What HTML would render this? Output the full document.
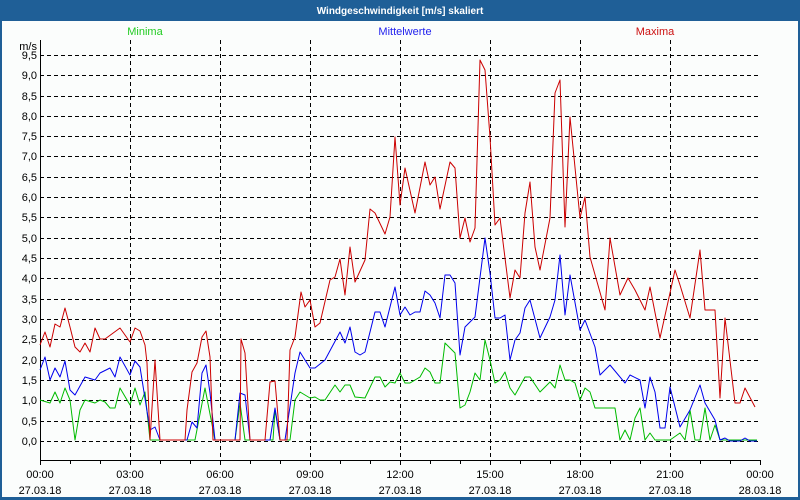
<!DOCTYPE html>
<html><head><meta charset="utf-8"><style>
html,body{margin:0;padding:0;width:800px;height:500px;overflow:hidden;background:#1f5f97}
svg{display:block}
text{font-family:"Liberation Sans",sans-serif;font-size:11px}
</style></head><body>
<svg width="800" height="500" viewBox="0 0 800 500" xmlns="http://www.w3.org/2000/svg">
<rect x="0" y="0" width="800" height="500" fill="#1f5f97"/>
<rect x="2" y="21" width="796" height="476" fill="#fbfdfc"/>
<text x="400" y="14" fill="#fff" font-weight="bold" text-anchor="middle" style="font-size:10px">Windgeschwindigkeit [m/s] skaliert</text>
<text x="145" y="35" fill="#22cc22" text-anchor="middle">Minima</text>
<text x="405" y="35" fill="#2222ee" text-anchor="middle">Mittelwerte</text>
<text x="655" y="35" fill="#cc1111" text-anchor="middle">Maxima</text>
<g stroke="#000" stroke-width="1" stroke-dasharray="4,3" fill="none">
<path d="M40 441.5H760M40 421.5H760M40 400.5H760M40 380.5H760M40 360.5H760M40 339.5H760M40 319.5H760M40 299.5H760M40 278.5H760M40 258.5H760M40 238.5H760M40 217.5H760M40 197.5H760M40 177.5H760M40 156.5H760M40 136.5H760M40 116.5H760M40 96.5H760M40 75.5H760M40 55.5H760"/>
<path d="M130.5 40V460M220.5 40V460M310.5 40V460M400.5 40V460M490.5 40V460M580.5 40V460M670.5 40V460"/>
</g>
<g stroke="#000" stroke-width="1" fill="none">
<path d="M40.5 40V460.5H760"/>
<path d="M40.5 460V465M70.5 460V464M100.5 460V464M130.5 460V465M160.5 460V464M190.5 460V464M220.5 460V465M250.5 460V464M280.5 460V464M310.5 460V465M340.5 460V464M370.5 460V464M400.5 460V465M430.5 460V464M460.5 460V464M490.5 460V465M520.5 460V464M550.5 460V464M580.5 460V465M610.5 460V464M640.5 460V464M670.5 460V465M700.5 460V464M730.5 460V464M760.5 460V465"/>
</g>
<g fill="#000" text-anchor="end">
<text x="37" y="50">m/s</text>
<text x="37" y="59">9,5</text><text x="37" y="79">9,0</text><text x="37" y="100">8,5</text><text x="37" y="120">8,0</text><text x="37" y="140">7,5</text><text x="37" y="160">7,0</text><text x="37" y="181">6,5</text><text x="37" y="201">6,0</text><text x="37" y="221">5,5</text><text x="37" y="242">5,0</text><text x="37" y="262">4,5</text><text x="37" y="282">4,0</text><text x="37" y="303">3,5</text><text x="37" y="323">3,0</text><text x="37" y="343">2,5</text><text x="37" y="364">2,0</text><text x="37" y="384">1,5</text><text x="37" y="404">1,0</text><text x="37" y="425">0,5</text><text x="37" y="445">0,0</text>
</g>
<g fill="#000" text-anchor="middle">
<text x="40" y="478">00:00</text><text x="40" y="494">27.03.18</text>
<text x="130" y="478">03:00</text><text x="130" y="494">27.03.18</text>
<text x="220" y="478">06:00</text><text x="220" y="494">27.03.18</text>
<text x="310" y="478">09:00</text><text x="310" y="494">27.03.18</text>
<text x="400" y="478">12:00</text><text x="400" y="494">27.03.18</text>
<text x="490" y="478">15:00</text><text x="490" y="494">27.03.18</text>
<text x="580" y="478">18:00</text><text x="580" y="494">27.03.18</text>
<text x="670" y="478">21:00</text><text x="670" y="494">27.03.18</text>
<text x="760" y="478">00:00</text><text x="760" y="494">28.03.18</text>
</g>
<g fill="none" stroke-width="1" stroke-linejoin="round">
<polyline stroke="#00bb00" points="40,400 50,403 55,392 60,403 65,388 70,400 75,440 80,410 85,400 95,403 100,400 105,402 110,408 115,408 120,388 130,405 135,388 140,405 145,392 150,440 195,440 205,388 215,440 235,440 240,403 245,440 273,440 275,410 280,440 290,440 295,400 300,392 310,398 315,397 320,400 325,400 335,385 340,392 345,385 350,385 355,397 365,398 375,377 380,377 385,387 390,382 395,383 400,373 405,383 410,383 420,377 425,368 430,372 435,383 440,383 445,343 455,353 460,408 465,405 470,392 475,373 480,380 485,340 490,360 495,383 500,380 505,372 510,388 515,395 525,377 530,377 540,392 550,382 555,388 560,365 565,380 570,380 575,383 580,400 585,388 590,392 595,408 615,408 620,440 625,430 630,440 635,418 640,408 645,440 650,433 655,440 670,440 680,433 685,440 690,410 695,440 700,440 705,408 710,440 715,425 720,440 757,440"/>
<polyline stroke="#0000ee" points="40,370 45,357 50,380 55,368 60,377 65,361 70,390 75,395 85,377 95,380 100,373 110,368 115,377 120,357 130,375 135,361 140,367 150,430 155,427 160,440 187,440 192,422 197,428 202,373 206,365 210,393 215,440 235,440 240,393 245,395 250,440 270,440 275,408 280,440 285,440 295,373 300,352 310,368 315,368 325,360 340,332 345,343 350,327 355,352 360,355 365,352 375,312 380,312 385,327 395,287 400,315 405,307 410,315 415,312 420,312 425,291 430,295 435,303 440,318 445,275 450,275 455,283 460,355 465,327 475,317 485,238 490,273 495,318 500,318 505,315 510,360 515,340 520,333 525,308 530,300 540,338 550,317 555,300 560,255 565,315 570,275 580,330 585,320 595,347 600,375 610,365 625,383 630,375 640,380 645,408 650,377 655,392 660,428 665,428 670,387 680,427 690,410 700,385 705,403 715,420 720,440 725,438 730,441 740,441 745,438 750,441 757,441"/>
<polyline stroke="#cc0000" points="40,345 45,332 50,347 55,324 60,327 65,308 70,327 75,347 80,352 85,343 90,352 95,328 100,339 105,339 120,328 130,342 135,328 140,331 145,345 147,363 150,440 155,360 160,440 185,440 187,410 192,372 197,363 202,337 206,331 210,357 213,440 240,440 241,339 245,353 250,440 265,440 270,382 275,381 280,440 287,440 290,350 295,337 301,292 305,307 310,300 315,327 320,323 330,280 335,277 340,259 345,295 350,247 355,282 365,260 370,209 375,213 385,234 390,217 395,137 400,205 405,168 415,213 425,162 430,185 435,177 440,209 450,162 455,168 460,238 465,218 470,242 475,228 480,60 485,70 490,137 495,225 500,218 510,298 515,270 520,278 525,213 530,182 535,247 540,270 550,218 555,93 560,80 565,227 570,117 580,218 585,197 590,257 605,310 610,238 620,295 628,278 635,290 645,310 650,287 660,338 670,293 675,270 680,285 690,318 700,250 705,310 715,310 720,398 725,318 735,403 740,403 745,388 755,407"/>
</g>
</svg>
</body></html>
